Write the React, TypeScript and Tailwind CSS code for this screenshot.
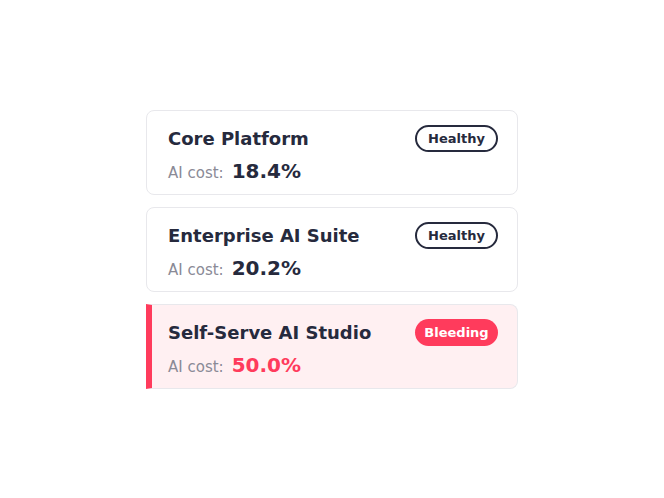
const products = [
  { name: "Core Platform", cost: "18.4%", status: "Healthy" },
  { name: "Enterprise AI Suite", cost: "20.2%", status: "Healthy" },
  { name: "Self-Serve AI Studio", cost: "50.0%", status: "Bleeding" },
];

function ProductCard({ name, cost, status }: { name: string; cost: string; status: string }) {
  const bleeding = status === "Bleeding";
  return (
    <div
      className={
        bleeding
          ? "h-[85px] rounded-r-lg border border-[#e8e8ec] border-l-[6px] border-l-[#ff3b5c] bg-[#fff0f2] pl-[16px] pr-[19px] pt-[14px]"
          : "h-[85px] rounded-lg border border-[#e8e8ec] bg-white pl-[21px] pr-[19px] pt-[14px]"
      }
    >
      <div className="flex items-center justify-between">
        <span className="text-[18px] font-bold text-[#262a3d]">{name}</span>
        {bleeding ? (
          <span className="flex h-[27px] w-[83px] items-center justify-center rounded-full bg-[#ff3b5c] pt-[1px] text-[13px] font-bold text-white">
            {status}
          </span>
        ) : (
          <span className="flex h-[27px] w-[83px] items-center justify-center rounded-full border-2 border-[#262a3d] pt-[1px] text-[13px] font-bold text-[#262a3d]">
            {status}
          </span>
        )}
      </div>
      <div className="mt-[4px] flex items-baseline gap-[8px]">
        <span className="text-[15px] text-[#8a8a96]">AI cost:</span>
        <span className={bleeding ? "text-[20px] font-bold text-[#ff3b5c]" : "text-[20px] font-bold text-[#262a3d]"}>
          {cost}
        </span>
      </div>
    </div>
  );
}

export default function App() {
  return (
    <div
      className="flex h-[498px] w-[664px] items-center justify-center bg-white"
      style={{ fontFamily: '"DejaVu Sans", sans-serif' }}
    >
      <div className="flex w-[372px] flex-col gap-[12px]">
        {products.map((p) => (
          <ProductCard key={p.name} {...p} />
        ))}
      </div>
    </div>
  );
}
